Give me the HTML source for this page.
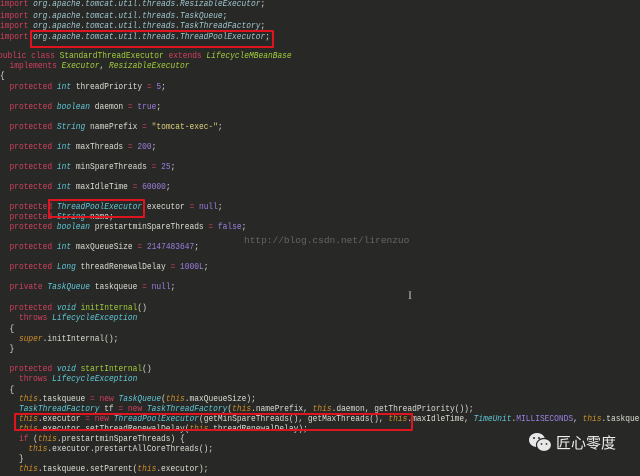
<!DOCTYPE html>
<html><head><meta charset="utf-8">
<style>
html,body{margin:0;padding:0;}
body{width:640px;height:470px;overflow:hidden;background:#282826;position:relative;font-family:"Liberation Mono",monospace;}
.l{position:absolute;left:0;white-space:pre;font-size:7.9px;line-height:10px;color:#dcdcd4;transform:scaleY(1.18);transform-origin:left center;filter:blur(0.3px);}
.k{color:#d0405e}
.t{color:#5fc9d8;font-style:italic}
.p{color:#9fc8cf;font-style:italic}
.g{color:#a2cd3c}
.gi{color:#a2cd3c;font-style:italic}
.n{color:#9d7fe0}
.s{color:#d9d07a}
.th{color:#cf8f2a;font-style:italic}
.c{color:#9d7fe0}
.box{position:absolute;border:2px solid #e0141e;border-radius:1px;}
</style></head><body>
<div class="l" style="top:0px"><span class="k">import</span> <span class="p">org.apache.tomcat.util.threads.ResizableExecutor</span>;</div>
<div class="l" style="top:12px"><span class="k">import</span> <span class="p">org.apache.tomcat.util.threads.TaskQueue</span>;</div>
<div class="l" style="top:22px"><span class="k">import</span> <span class="p">org.apache.tomcat.util.threads.TaskThreadFactory</span>;</div>
<div class="l" style="top:33px"><span class="k">import</span> <span class="p">org.apache.tomcat.util.threads.ThreadPoolExecutor</span>;</div>
<div class="l" style="top:52px;left:-2px"><span class="k">public class</span> <span class="g">StandardThreadExecutor</span> <span class="k">extends</span> <span class="gi">LifecycleMBeanBase</span></div>
<div class="l" style="top:62px">  <span class="k">implements</span> <span class="gi">Executor</span>, <span class="gi">ResizableExecutor</span></div>
<div class="l" style="top:72px">{</div>
<div class="l" style="top:83px">  <span class="k">protected</span> <span class="t">int</span> threadPriority <span class="k">=</span> <span class="n">5</span>;</div>
<div class="l" style="top:103px">  <span class="k">protected</span> <span class="t">boolean</span> daemon <span class="k">=</span> <span class="n">true</span>;</div>
<div class="l" style="top:123px">  <span class="k">protected</span> <span class="t">String</span> namePrefix <span class="k">=</span> <span class="s">"tomcat-exec-"</span>;</div>
<div class="l" style="top:143px">  <span class="k">protected</span> <span class="t">int</span> maxThreads <span class="k">=</span> <span class="n">200</span>;</div>
<div class="l" style="top:163px">  <span class="k">protected</span> <span class="t">int</span> minSpareThreads <span class="k">=</span> <span class="n">25</span>;</div>
<div class="l" style="top:183px">  <span class="k">protected</span> <span class="t">int</span> maxIdleTime <span class="k">=</span> <span class="n">60000</span>;</div>
<div class="l" style="top:203px">  <span class="k">protected</span> <span class="t">ThreadPoolExecutor</span> executor <span class="k">=</span> <span class="n">null</span>;</div>
<div class="l" style="top:213px">  <span class="k">protected</span> <span class="t">String</span> name;</div>
<div class="l" style="top:223px">  <span class="k">protected</span> <span class="t">boolean</span> prestartminSpareThreads <span class="k">=</span> <span class="n">false</span>;</div>
<div class="l" style="top:243px">  <span class="k">protected</span> <span class="t">int</span> maxQueueSize <span class="k">=</span> <span class="n">2147483647</span>;</div>
<div class="l" style="top:263px">  <span class="k">protected</span> <span class="t">Long</span> threadRenewalDelay <span class="k">=</span> <span class="n">1000L</span>;</div>
<div class="l" style="top:283px">  <span class="k">private</span> <span class="t">TaskQueue</span> taskqueue <span class="k">=</span> <span class="n">null</span>;</div>
<div class="l" style="top:304px">  <span class="k">protected</span> <span class="t">void</span> <span class="g">initInternal</span>()</div>
<div class="l" style="top:314px">    <span class="k">throws</span> <span class="t">LifecycleException</span></div>
<div class="l" style="top:325px">  {</div>
<div class="l" style="top:335px">    <span class="th">super</span>.initInternal();</div>
<div class="l" style="top:345px">  }</div>
<div class="l" style="top:365px">  <span class="k">protected</span> <span class="t">void</span> <span class="g">startInternal</span>()</div>
<div class="l" style="top:375px">    <span class="k">throws</span> <span class="t">LifecycleException</span></div>
<div class="l" style="top:386px">  {</div>
<div class="l" style="top:395px">    <span class="th">this</span>.taskqueue <span class="k">=</span> <span class="k">new</span> <span class="t">TaskQueue</span>(<span class="th">this</span>.maxQueueSize);</div>
<div class="l" style="top:405px">    <span class="t">TaskThreadFactory</span> tf <span class="k">=</span> <span class="k">new</span> <span class="t">TaskThreadFactory</span>(<span class="th">this</span>.namePrefix, <span class="th">this</span>.daemon, getThreadPriority());</div>
<div class="l" style="top:415px">    <span class="th">this</span>.executor <span class="k">=</span> <span class="k">new</span> <span class="t">ThreadPoolExecutor</span>(getMinSpareThreads(), getMaxThreads(), <span class="th">this</span>.maxIdleTime, <span class="t">TimeUnit</span>.<span class="c">MILLISECONDS</span>, <span class="th">this</span>.taskqueue,</div>
<div class="l" style="top:425px">    <span class="th">this</span>.executor.setThreadRenewalDelay(<span class="th">this</span>.threadRenewalDelay);</div>
<div class="l" style="top:435px">    <span class="k">if</span> (<span class="th">this</span>.prestartminSpareThreads) {</div>
<div class="l" style="top:445px">      <span class="th">this</span>.executor.prestartAllCoreThreads();</div>
<div class="l" style="top:455px">    }</div>
<div class="l" style="top:465px">    <span class="th">this</span>.taskqueue.setParent(<span class="th">this</span>.executor);</div>

<div class="box" style="left:30px;top:30px;width:240px;height:14px"></div>
<div class="box" style="left:48px;top:199px;width:93px;height:15px"></div>
<div class="box" style="left:14px;top:413px;width:395px;height:14px"></div>

<div style="position:absolute;left:244px;top:235px;font-family:'Liberation Mono',monospace;font-size:9.5px;color:#66665f;white-space:pre">http://blog.csdn.net/lirenzuo</div>
<div style="position:absolute;left:408px;top:288px;font-family:'Liberation Serif',serif;font-size:12px;color:#bbb">I</div>

<svg style="position:absolute;left:528px;top:432px" width="26" height="22" viewBox="0 0 26 22">
<ellipse cx="9" cy="8" rx="8" ry="7" fill="#e8e8e8"/>
<ellipse cx="16" cy="13" rx="7.5" ry="6.5" fill="#e8e8e8" stroke="#282826" stroke-width="1.2"/>
<circle cx="6" cy="6" r="1" fill="#282826"/><circle cx="11" cy="6" r="1" fill="#282826"/>
<circle cx="13.5" cy="12" r="0.9" fill="#282826"/><circle cx="18.5" cy="12" r="0.9" fill="#282826"/>
</svg>
<div style="position:absolute;left:556px;top:432px;font-family:'Liberation Sans','Noto Sans CJK SC',sans-serif;font-size:15px;color:#eee;white-space:pre">匠心零度</div>
</body></html>
